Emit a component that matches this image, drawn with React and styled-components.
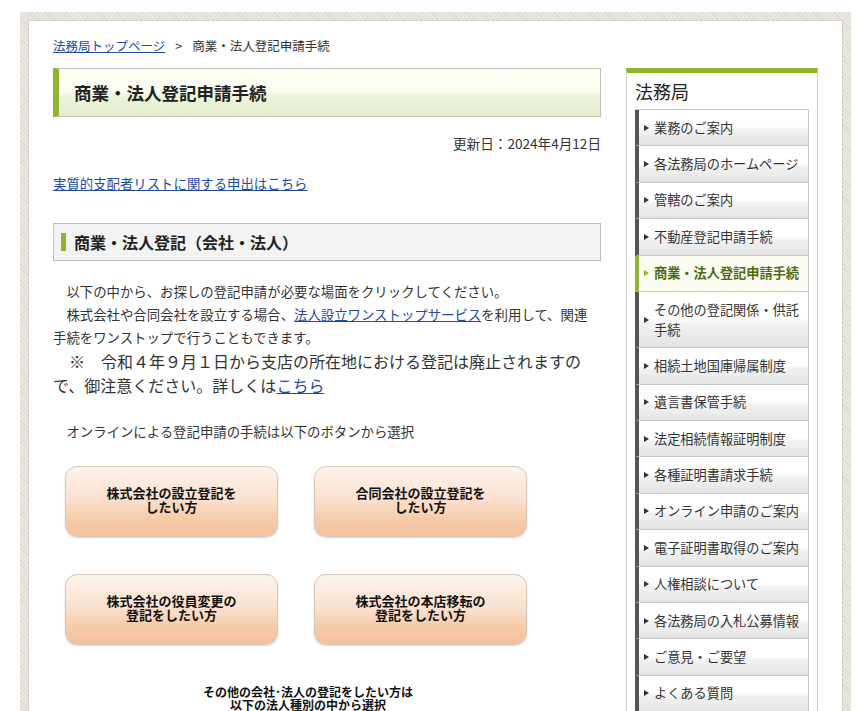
import React from "react";
import styled, { createGlobalStyle } from "styled-components";

const Global = createGlobalStyle`
  html { overflow: hidden; }
  body {
    margin: 0;
    background: #fff;
    font-family: "Noto Sans CJK JP", "Noto Sans", sans-serif;
    color: #333;
  }
  a { color: #1d4c9e; }
`;

const SP = "\u3000";

const Frame = styled.div`
  box-sizing: border-box;
  width: 831px;
  margin: 12px 0 0 20px;
  padding: 8px 8px 0 8px;
  background: repeating-linear-gradient(
    45deg,
    #dedad2 0px,
    #dedad2 1px,
    #ebe8e2 1px,
    #ebe8e2 3px
  );
`;

const Inner = styled.div`
  background: #fff;
  border: 1px solid #d6d2ca;
  border-bottom: none;
  padding: 16px 24px 40px 24px;
`;

const Breadcrumb = styled.div`
  font-size: 12.5px;
  line-height: 18px;
  color: #333;
  display: flex;
  a { color: #1d4c9e; }
`;

const Sep = styled.span`
  margin: 0 10px;
`;

const Columns = styled.div`
  display: flex;
  gap: 25px;
  margin-top: 13px;
  align-items: flex-start;
`;

const Main = styled.div`
  width: 548px;
  flex: none;
`;

const PageTitle = styled.h1`
  margin: 0;
  box-sizing: border-box;
  height: 49px;
  border: 1px solid #c2c2b8;
  border-left: 6px solid #8fb52d;
  background: linear-gradient(
    to bottom,
    #fdfdf5 0%,
    #fbfcef 50%,
    #eef5dc 55%,
    #e4eecd 100%
  );
  font-size: 17.5px;
  font-weight: bold;
  color: #222;
  display: flex;
  align-items: center;
  padding-left: 15px;
`;

const Updated = styled.div`
  margin-top: 16px;
  text-align: right;
  font-size: 13.6px;
  line-height: 20px;
`;

const TopLink = styled.div`
  margin-top: 20px;
  font-size: 13.4px;
  line-height: 20px;
`;

const SectionTitle = styled.h2`
  margin: 30px 0 0;
  box-sizing: border-box;
  height: 38px;
  background: #f3f3f3;
  border: 1px solid #bdbdbd;
  font-size: 16px;
  font-weight: bold;
  color: #222;
  display: flex;
  align-items: center;
  padding-left: 7px;
  gap: 8px;
  &::before {
    content: "";
    width: 5px;
    height: 18px;
    background: #8fb52d;
  }
`;

const Para = styled.p`
  margin: 19px 0 0;
  padding-right: 10px;
  font-size: 13.4px;
  line-height: 23px;
`;

const Notice = styled.p`
  margin: 0;
  font-size: 16px;
  line-height: 24px;
`;

const Lead = styled.p`
  margin: 23px 0 0;
  font-size: 13.4px;
  line-height: 23px;
`;

const ButtonGrid = styled.div`
  display: grid;
  grid-template-columns: 213px 213px;
  column-gap: 36px;
  row-gap: 37px;
  margin: 23px 0 0 12px;
`;

const BigButton = styled.a`
  box-sizing: border-box;
  height: 71px;
  border: 1px solid #d8c6b8;
  border-radius: 12px;
  background: linear-gradient(
    to bottom,
    #fdf3ec 0%,
    #fbe2d1 45%,
    #f6cba9 75%,
    #f4c19c 100%
  );
  box-shadow: 0 1px 2px rgba(0, 0, 0, 0.15);
  display: flex;
  align-items: center;
  justify-content: center;
  text-align: center;
  font-size: 13px;
  line-height: 14px;
  font-weight: bold;
  color: #111;
  text-decoration: none;
  padding-bottom: 4px;
`;

const Other = styled.div`
  margin-top: 40px;
  padding-right: 38px;
  text-align: center;
  font-size: 12px;
  line-height: 13px;
  font-weight: bold;
  color: #111;
`;

const Side = styled.aside`
  width: 192px;
  flex: none;
  box-sizing: border-box;
  border-top: 5px solid #8fb52d;
  border-left: 1px solid #cfcfcf;
  border-right: 1px solid #cfcfcf;
  padding: 0 8px 0 8px;
`;

const SideTitle = styled.div`
  font-size: 18px;
  line-height: 24px;
  padding: 6px 0 6px 0;
  color: #222;
`;

const Menu = styled.ul`
  list-style: none;
  margin: 0;
  padding: 0;
  border-top: 1px solid #c8c8c8;
`;

const MenuItem = styled.li`
  border-left: 4px solid ${(p) => (p.$active ? "#8fb52d" : "#555")};
  border-right: 1px solid #c8c8c8;
  border-bottom: 1px solid #c8c8c8;
  background: ${(p) =>
    p.$active
      ? "#fbfbf1"
      : "linear-gradient(to bottom, #ffffff 0%, #ffffff 48%, #f3f3f3 56%, #e3e3e3 100%)"};
  padding: 7.7px 4px 7.7px 5px;
  display: flex;
  align-items: center;
  gap: 5px;
  font-size: 13.2px;
  line-height: 20px;
  color: ${(p) => (p.$active ? "#4d6b12" : "#333")};
  font-weight: ${(p) => (p.$active ? "bold" : "normal")};
`;

const Arrow = styled.span`
  flex: none;
  width: 0;
  height: 0;
  border-top: 3.5px solid transparent;
  border-bottom: 3.5px solid transparent;
  border-left: 5px solid ${(p) => (p.$active ? "#8fb52d" : "#333")};
`;

const menu = [
  "業務のご案内",
  "各法務局のホームページ",
  "管轄のご案内",
  "不動産登記申請手続",
  "商業・法人登記申請手続",
  "その他の登記関係・供託手続",
  "相続土地国庫帰属制度",
  "遺言書保管手続",
  "法定相続情報証明制度",
  "各種証明書請求手続",
  "オンライン申請のご案内",
  "電子証明書取得のご案内",
  "人権相談について",
  "各法務局の入札公募情報",
  "ご意見・ご要望",
  "よくある質問",
];

const buttons = [
  ["株式会社の設立登記を", "したい方"],
  ["合同会社の設立登記を", "したい方"],
  ["株式会社の役員変更の", "登記をしたい方"],
  ["株式会社の本店移転の", "登記をしたい方"],
];

export default function App() {
  return (
    <>
      <Global />
      <Frame>
        <Inner>
          <Breadcrumb>
            <a href="#">法務局トップページ</a>
            <Sep>&gt;</Sep>
            <span>商業・法人登記申請手続</span>
          </Breadcrumb>
          <Columns>
            <Main>
              <PageTitle>商業・法人登記申請手続</PageTitle>
              <Updated>更新日：2024年4月12日</Updated>
              <TopLink>
                <a href="#">実質的支配者リストに関する申出はこちら</a>
              </TopLink>
              <SectionTitle>商業・法人登記（会社・法人）</SectionTitle>
              <Para>
                {SP}以下の中から、お探しの登記申請が必要な場面をクリックしてください。
                <br />
                {SP}株式会社や合同会社を設立する場合、
                <a href="#">法人設立ワンストップサービス</a>
                を利用して、関連手続をワンストップで行うこともできます。
              </Para>
              <Notice>
                {SP}※{SP}令和４年９月１日から支店の所在地における登記は廃止されますので、御注意ください。詳しくは
                <a href="#">こちら</a>
              </Notice>
              <Lead>{SP}オンラインによる登記申請の手続は以下のボタンから選択</Lead>
              <ButtonGrid>
                {buttons.map(([a, b]) => (
                  <BigButton href="#" key={a}>
                    {a}
                    <br />
                    {b}
                  </BigButton>
                ))}
              </ButtonGrid>
              <Other>
                その他の会社･法人の登記をしたい方は
                <br />
                以下の法人種別の中から選択
              </Other>
            </Main>
            <Side>
              <SideTitle>法務局</SideTitle>
              <Menu>
                {menu.map((m) => {
                  const active = m === "商業・法人登記申請手続";
                  return (
                    <MenuItem key={m} $active={active}>
                      <Arrow $active={active} />
                      <span>{m}</span>
                    </MenuItem>
                  );
                })}
              </Menu>
            </Side>
          </Columns>
        </Inner>
      </Frame>
    </>
  );
}
